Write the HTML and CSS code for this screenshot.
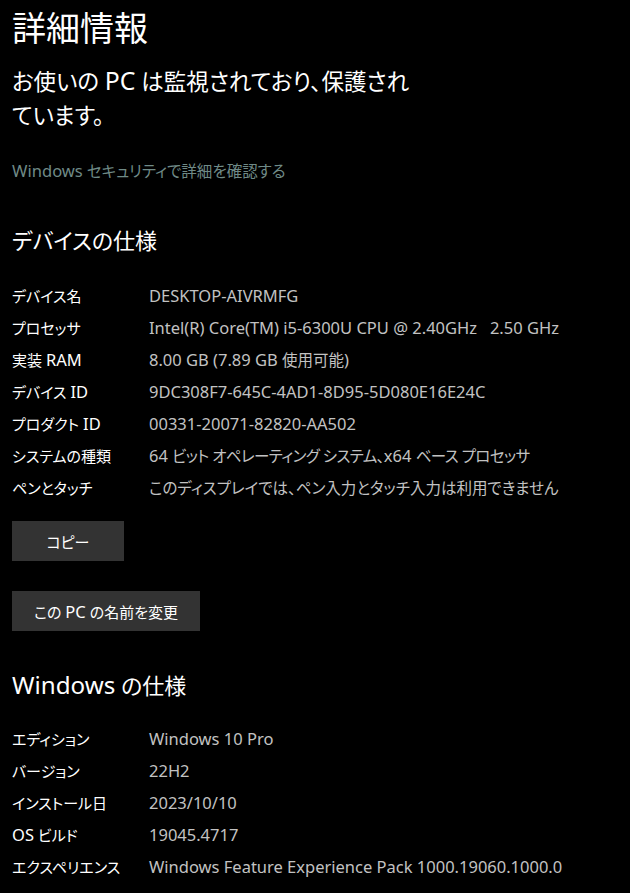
FILE: index.html
```html
<!DOCTYPE html>
<html lang="ja">
<head>
<meta charset="utf-8">
<link rel="stylesheet" href="styles.css">
</head>
<body>
<main class="page">
  <h1 class="title">詳細情報</h1>
  <p class="status">お使いの <span class="lat">PC</span> は監視されており、保護され<br>ています。</p>
  <a class="link" href="#"><span class="lat">Windows</span> セキュリティで詳細を確認する</a>

  <h2 class="section">デバイスの仕様</h2>
  <dl class="specs">
    <dt>デバイス名</dt><dd>DESKTOP-AIVRMFG</dd>
    <dt>プロセッサ</dt><dd class="pre">Intel(R) Core(TM) i5-6300U CPU @ 2.40GHz   2.50 GHz</dd>
    <dt>実装 <span class="lat">RAM</span></dt><dd>8.00 GB (7.89 GB <span class="ja">使用可能</span>)</dd>
    <dt>デバイス <span class="lat">ID</span></dt><dd>9DC308F7-645C-4AD1-8D95-5D080E16E24C</dd>
    <dt>プロダクト <span class="lat">ID</span></dt><dd>00331-20071-82820-AA502</dd>
    <dt>システムの種類</dt><dd>64 <span class="ja narrow">ビット オペレーティング システム、</span>x64 <span class="ja narrow">ベース プロセッサ</span></dd>
    <dt>ペンとタッチ</dt><dd><span class="ja">このディスプレイでは、ペン入力とタッチ入力は利用できません</span></dd>
  </dl>
  <div class="buttons">
    <button class="btn btn-copy">コピー</button>
    <button class="btn">この <span class="lat">PC</span> の名前を変更</button>
  </div>

  <h2 class="section section-win"><span class="lat">Windows</span> の仕様</h2>
  <dl class="specs specs-win">
    <dt>エディション</dt><dd>Windows 10 Pro</dd>
    <dt>バージョン</dt><dd>22H2</dd>
    <dt>インストール日</dt><dd>2023/10/10</dd>
    <dt><span class="lat">OS</span> ビルド</dt><dd>19045.4717</dd>
    <dt>エクスペリエンス</dt><dd>Windows Feature Experience Pack 1000.19060.1000.0</dd>
  </dl>
</main>
</body>
</html>
```
FILE: styles.css
```css
html, body {
  margin: 0;
  padding: 0;
  background: #000;
}
body {
  font-family: "Noto Sans", "Noto Sans CJK JP", sans-serif;
  font-feature-settings: "palt";
  color: #fff;
}
.lat {
  font-size: 1.1em;
}
.page {
  padding: 6px 0 0 12px;
  display: flex;
  flex-direction: column;
  align-items: flex-start;
}
.title {
  margin: 0;
  font-size: 34px;
  font-weight: 400;
  line-height: 44px;
}
.status {
  margin: 14px 0 0;
  font-size: 22.5px;
  line-height: 34px;
  font-weight: 400;
}
.link {
  margin-top: 27px;
  font-size: 15.5px;
  line-height: 22px;
  color: #6f8a87;
  text-decoration: none;
}
.link .lat {
  font-size: 1.07em;
}
.section {
  margin: 42px 0 0;
  font-size: 22px;
  font-weight: 400;
  line-height: 32px;
}
.section-win {
  margin-top: 38px;
}
.specs {
  margin: 23px 0 0;
  display: grid;
  grid-template-columns: 137px auto;
  grid-auto-rows: 32px;
  align-items: center;
  font-size: 15px;
}
.specs-win {
  margin-top: 21px;
}
.specs dt {
  color: #fff;
  white-space: nowrap;
}
.specs dd {
  margin: 0;
  font-size: 16.5px;
  color: #c2c2c2;
  white-space: nowrap;
}
.specs dd .ja {
  font-size: 15.5px;
}
.specs dd .ja.narrow {
  letter-spacing: -0.6px;
}
.specs dd.pre {
  white-space: pre;
}
.buttons {
  margin-top: 18px;
  display: flex;
  flex-direction: column;
  align-items: flex-start;
  gap: 30px;
}
.btn {
  height: 40px;
  padding: 0 22px;
  border: none;
  background: #333;
  color: #fff;
  font-family: inherit;
  font-feature-settings: "palt";
  font-size: 15px;
}
.btn-copy {
  width: 112px;
}
```
